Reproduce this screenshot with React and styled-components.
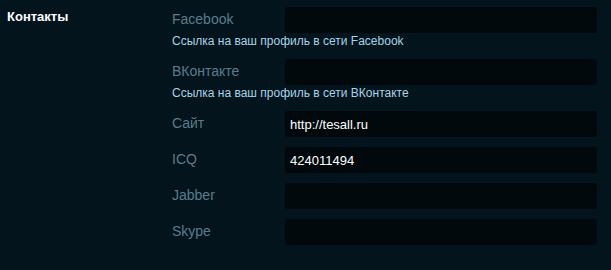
import React from "react"
import styled, { createGlobalStyle } from "styled-components"

const Global = createGlobalStyle`
body{
  margin:0;
  background:#03141d;
  font-family:"Liberation Sans", Arial, sans-serif;
}
`

const fields = [
  { label: "Facebook", value: "", hint: "Ссылка на ваш профиль в сети Facebook" },
  { label: "ВКонтакте", value: "", hint: "Ссылка на ваш профиль в сети ВКонтакте" },
  { label: "Сайт", value: "http://tesall.ru" },
  { label: "ICQ", value: "424011494" },
  { label: "Jabber", value: "" },
  { label: "Skype", value: "" },
]

const App = () => {
  return (
    <>
      <Global />
      <Section>
        <Title>Контакты</Title>
        <Fields>
          {fields.map((f) => (
            <Field key={f.label}>
              <Row>
                <Label>{f.label}</Label>
                <Input defaultValue={f.value} />
              </Row>
              {f.hint && <Hint>{f.hint}</Hint>}
            </Field>
          ))}
        </Fields>
      </Section>
    </>
  )
}
export default App

const Section = styled.div`
width:611px;
height:270px;
display:flex;
padding:7px 0 0 7px;
box-sizing:border-box;
background:#03141d;
`
const Title = styled.div`
width:165px;
font-size:13px;
font-weight:bold;
color:#ffffff;
padding-top:2px;
`
const Fields = styled.div`
display:flex;
flex-direction:column;
`
const Field = styled.div`
display:flex;
flex-direction:column;
margin-bottom:10px;
`
const Row = styled.div`
display:flex;
align-items:flex-start;
`
const Label = styled.div`
width:113px;
font-size:14px;
color:#5b7d8c;
padding-top:4px;
`
const Input = styled.input`
width:312px;
height:26px;
box-sizing:border-box;
background:#01090d;
border:none;
border-radius:3px;
outline:none;
padding:0 5px;
font-family:"Liberation Sans", Arial, sans-serif;
font-size:13px;
color:#ffffff;
`
const Hint = styled.div`
font-size:12px;
line-height:14px;
color:#a9d3e8;
margin:1px 0 1px;
`
